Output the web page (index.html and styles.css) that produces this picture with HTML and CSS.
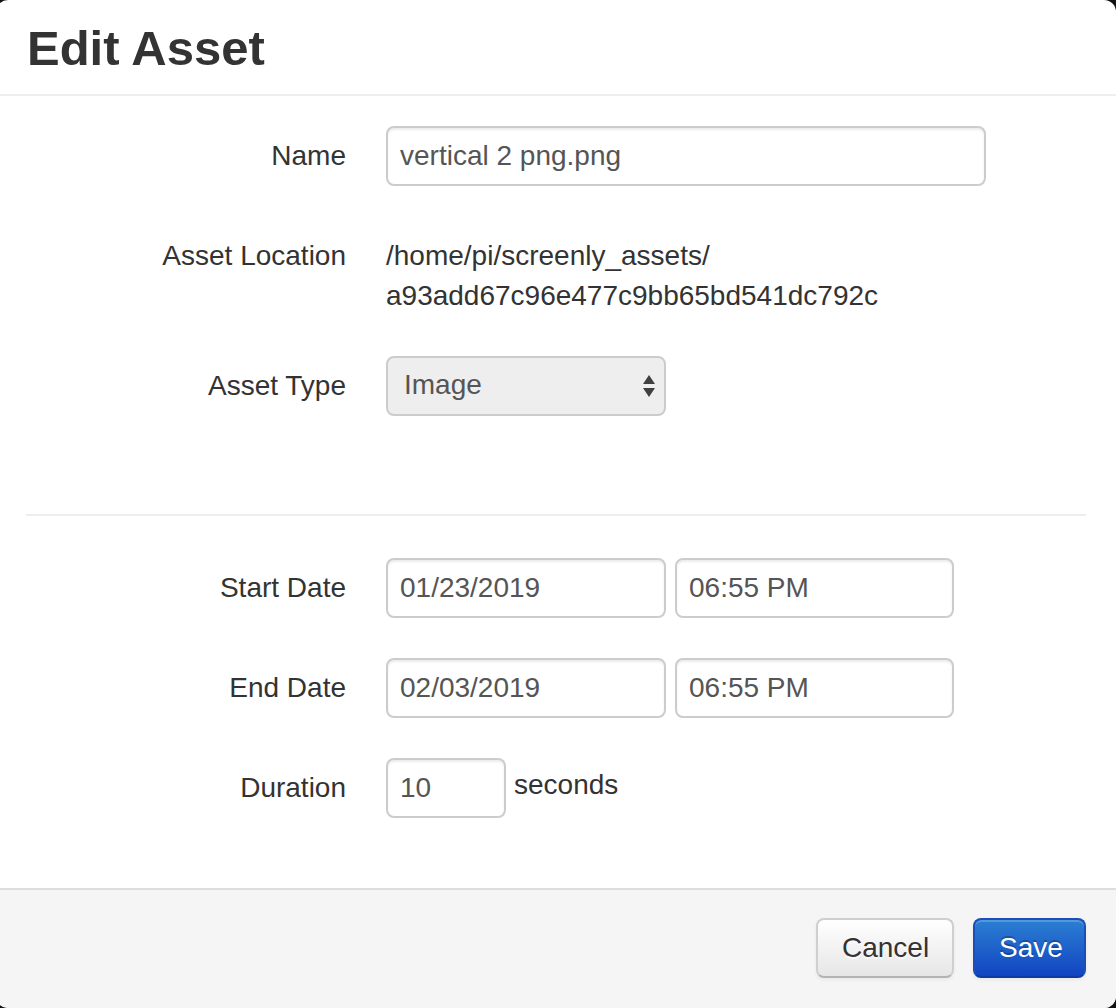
FILE: index.html
```html
<!DOCTYPE html>
<html>
<head>
<meta charset="utf-8">
<link rel="stylesheet" href="styles.css">
</head>
<body>
<div class="modal">
  <div class="modal-header">
    <h3 class="title">Edit Asset</h3>
  </div>
  <div class="modal-body">
    <div class="group">
      <label class="label">Name</label>
      <div class="controls">
        <input class="input input-name" type="text" value="vertical 2 png.png">
      </div>
    </div>
    <div class="group">
      <label class="label">Asset Location</label>
      <div class="controls">
        <div class="location">/home/pi/screenly_assets/<br>a93add67c96e477c9bb65bd541dc792c</div>
      </div>
    </div>
    <div class="group">
      <label class="label">Asset Type</label>
      <div class="controls">
        <div class="select">
          <span class="select-text">Image</span>
          <svg class="select-arrows" width="14" height="26" viewBox="0 0 14 26">
            <path d="M7 2 L13 11 L1 11 Z" fill="#404040"/>
            <path d="M1 15 L13 15 L7 24 Z" fill="#404040"/>
          </svg>
        </div>
      </div>
    </div>
    <hr class="divider">
    <div class="group">
      <label class="label">Start Date</label>
      <div class="controls row">
        <input class="input input-date" type="text" value="01/23/2019">
        <input class="input input-time" type="text" value="06:55 PM">
      </div>
    </div>
    <div class="group">
      <label class="label">End Date</label>
      <div class="controls row">
        <input class="input input-date" type="text" value="02/03/2019">
        <input class="input input-time" type="text" value="06:55 PM">
      </div>
    </div>
    <div class="group last">
      <label class="label">Duration</label>
      <div class="controls row-top">
        <input class="input input-duration" type="text" value="10">
        <span class="suffix">seconds</span>
      </div>
    </div>
  </div>
  <div class="modal-footer">
    <button class="btn btn-default">Cancel</button>
    <button class="btn btn-primary">Save</button>
  </div>
</div>
</body>
</html>
```

FILE: styles.css
```css
html, body {
  margin: 0;
  padding: 0;
  background: #111;
  height: 1008px;
  overflow: hidden;
}

body {
  font-family: "Liberation Sans", Arial, sans-serif;
  font-size: 28px;
  line-height: 40px;
  color: #333;
}

.modal {
  width: 1120px;
  height: 1008px;
  margin-left: -4px;
  background: #fff;
  border-radius: 12px;
  overflow: hidden;
  display: flex;
  flex-direction: column;
}

.modal-header {
  padding: 19px 30px 17px 31px;
  border-bottom: 2px solid #eee;
}

.title {
  margin: 0;
  font-size: 49px;
  line-height: 58px;
  font-weight: bold;
  color: #333;
}

.modal-body {
  padding: 30px 30px 30px 30px;
  flex: 1;
}

.group {
  display: grid;
  grid-template-columns: 320px 1fr;
  column-gap: 40px;
  margin-bottom: 40px;
}

.label {
  text-align: right;
  padding-top: 10px;
  line-height: 40px;
  color: #333;
}

.controls {
  min-width: 0;
}

.location {
  padding-top: 10px;
  line-height: 40px;
  color: #333;
}

.input {
  box-sizing: border-box;
  height: 60px;
  margin: 0;
  padding: 8px 12px;
  font-family: "Liberation Sans", Arial, sans-serif;
  font-size: 28px;
  line-height: 40px;
  color: #555;
  background: #fff;
  border: 2px solid #ccc;
  border-radius: 8px;
  box-shadow: inset 0 2px 2px rgba(0, 0, 0, 0.075);
  outline: none;
  display: block;
}

.input-name {
  width: 600px;
}

.row {
  display: flex;
  gap: 9px;
}

.input-date {
  width: 280px;
}

.input-time {
  width: 279px;
}

.row-top {
  display: flex;
  align-items: flex-start;
}

.input-duration {
  width: 120px;
}

.suffix {
  margin-left: 8px;
  padding-top: 7px;
  line-height: 40px;
  color: #333;
}

.select {
  box-sizing: border-box;
  width: 280px;
  height: 60px;
  border: 2px solid #ccc;
  border-radius: 8px;
  background: #eee;
  display: flex;
  align-items: center;
  justify-content: space-between;
  padding: 0 8px 0 16px;
}

.select-text {
  color: #555;
  line-height: 40px;
  margin-top: -2px;
}

.select-arrows {
  display: block;
}

.divider {
  margin: 98px 0 42px 0;
  border: 0;
  border-top: 2px solid #eee;
  height: 0;
}

.modal-footer {
  background: #f5f5f5;
  border-top: 2px solid #ddd;
  padding: 28px 30px 30px;
  display: flex;
  justify-content: flex-end;
  gap: 19px;
}

.btn {
  box-sizing: border-box;
  height: 60px;
  padding: 8px 24px;
  font-family: "Liberation Sans", Arial, sans-serif;
  font-size: 28px;
  line-height: 40px;
  border-radius: 8px;
  cursor: pointer;
}

.btn-default {
  width: 138px;
  color: #333;
  text-shadow: 0 2px 2px rgba(255, 255, 255, 0.75);
  background: linear-gradient(to bottom, #ffffff, #e6e6e6);
  border: 2px solid #cfcfcf;
  border-bottom-color: #b3b3b3;
  box-shadow: inset 0 2px 0 rgba(255, 255, 255, 0.2), 0 2px 4px rgba(0, 0, 0, 0.05);
}

.btn-primary {
  width: 113px;
  color: #fff;
  text-shadow: 0 -2px 0 rgba(0, 0, 0, 0.25);
  background: linear-gradient(to bottom, #2b7fd3, #1244c2);
  border: 2px solid #1a4fb8;
  border-bottom-color: #0f3aa0;
  box-shadow: inset 0 2px 0 rgba(255, 255, 255, 0.2), 0 2px 4px rgba(0, 0, 0, 0.05);
}
```
